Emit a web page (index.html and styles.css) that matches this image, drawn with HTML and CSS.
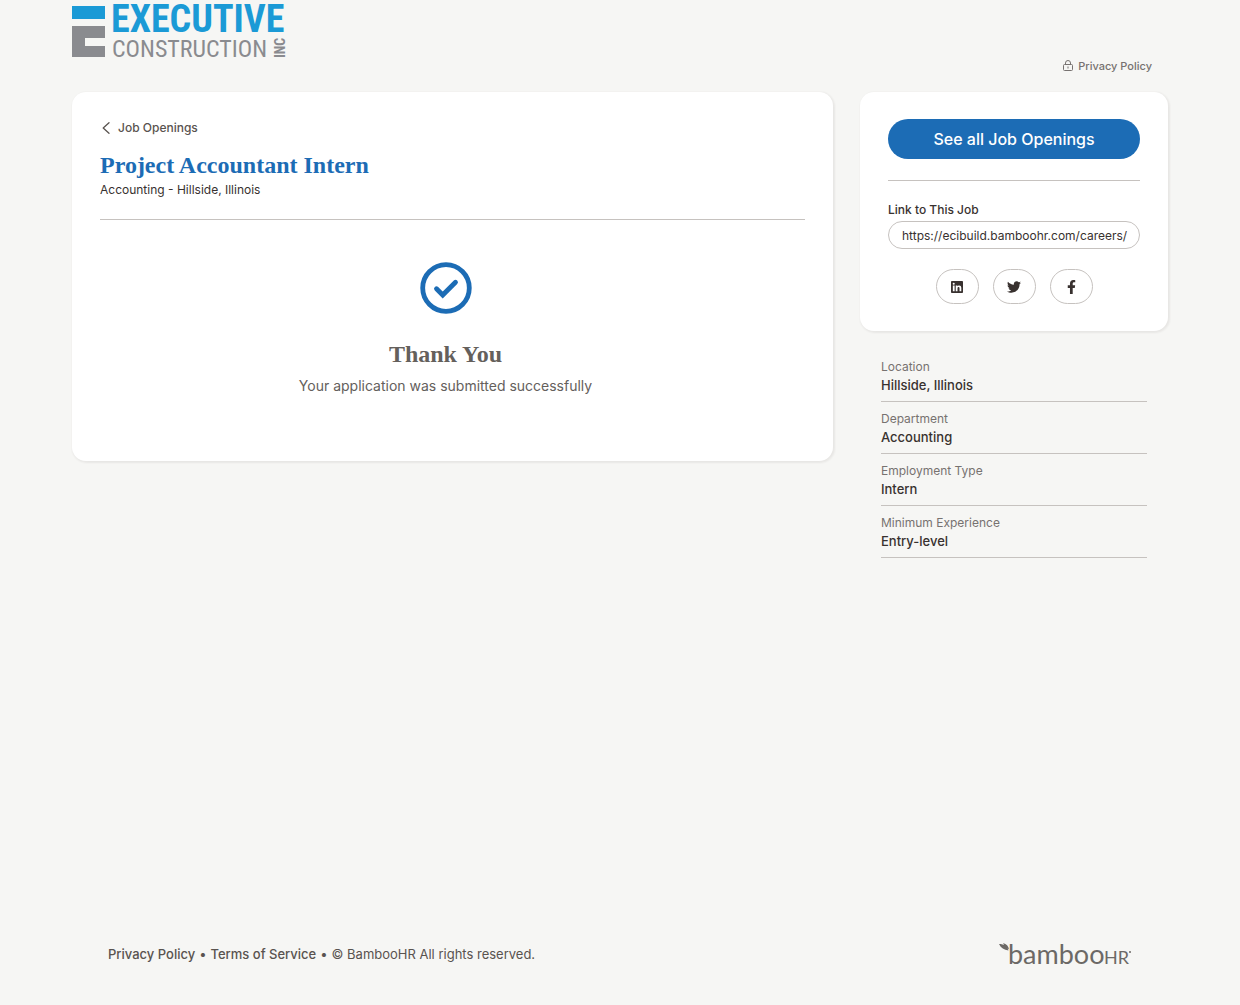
FILE: index.html
```html
<!DOCTYPE html>
<html lang="en">
<head>
    <meta charset="UTF-8">
    <meta name="viewport" content="width=device-width, initial-scale=1.0">
    <title>Project Accountant Intern - Executive Construction Inc</title>
    <link rel="stylesheet" href="styles.css">
</head>
<body>

<div class="page">
    <header class="header">
        <a href="#" class="logo" aria-label="Executive Construction Inc">
            <svg width="220" height="60" viewBox="0 0 220 60">
                <path fill="#1b9ad6" d="M0 6h33v13H0z"/>
                <path fill="#8a8b8f" d="M0 26h33v12H13v8h20v11H0z"/>
                <text class="logo-top" x="39" y="32">EXECUTIVE</text>
                <text class="logo-bottom" x="40" y="57">CONSTRUCTION</text>
                <text class="logo-inc" transform="translate(213 58) rotate(-90)">INC</text>
            </svg>
        </a>
        <a href="#" class="privacy">
            <svg width="10" height="12" viewBox="0 0 10 12" fill="none" stroke="currentColor">
                <rect x="0.5" y="4.5" width="9" height="6" rx="1"/>
                <path d="M2.5 4.5V3a2.5 2.5 0 0 1 5 0v1.500M5 6.500v2"/>
            </svg>
            Privacy Policy
        </a>
    </header>

    <div class="content">
        <main class="card job">
            <a href="#" class="back">
                <svg width="8" height="12" viewBox="0 0 8 12" fill="none" stroke="currentColor" stroke-width="1.300" stroke-linecap="round" stroke-linejoin="round">
                    <path d="M7 .8 1.200 6 7 11.200"/>
                </svg>
                Job Openings
            </a>
            <h1>Project Accountant Intern</h1>
            <p class="subtitle">Accounting - Hillside, Illinois</p>

            <!-- Submitted message -->
            <div class="success">
                <svg width="52" height="52" viewBox="0 0 52 52" fill="none" stroke="#1c6cb5">
                    <circle cx="26" cy="26" r="23.300" stroke-width="4.800"/>
                    <path d="m16.500 26.800 6.200 6.200 12.800-12.800" stroke-width="4.800" stroke-linecap="round"/>
                </svg>
                <h2>Thank You</h2>
                <p>Your application was submitted successfully</p>
            </div>
        </main>

        <aside class="sidebar">
            <div class="card share">
                <button type="button" class="all-jobs">See all Job Openings</button>
                <label for="job-link">Link to This Job</label>
                <input type="text" id="job-link" value="https://ecibuild.bamboohr.com/careers/" readonly>
                <div class="social">
                    <button type="button" aria-label="Share on LinkedIn">
                        <svg width="12" height="12" viewBox="0 0 448 448">
                            <path d="M416 0H32C14 0 0 14.500 0 32.300v383.400C0 433.500 14 448 32 448h384c17.600 0 32-14.500 32-32.300V32.300C448 14.500 433.600 0 416 0zM135 384H69V170h66zM102 141a38.500 38.500 0 1 1 0-77 38.500 38.500 0 0 1 0 77zm282 243h-66V280c0-25 0-57-35-57s-40 27-40 55v106h-66V170h64v29h1c9-17 30-35 63-35 67 0 80 44 80 102z"/>
                        </svg>
                    </button>
                    <button type="button" aria-label="Share on Twitter">
                        <svg width="14" height="14" viewBox="0 0 512 512">
                            <path d="M459 152c.3 4.500.3 9 .3 13.600 0 139-106 299-299 299-59 0-115-17-161-47 8 1 16 1.300 25 1.300 49 0 94-17 130-45-46-1-85-31-98-73 6.500 1 13 1.600 20 1.600 9 0 19-1.300 28-3.600C56 289 20 247 20 196v-1.300c14 8 30 13 47 13.600C39 189.500 21 158 21 121c0-19 5-37 14-53 52 64 129 105 216 110-1.600-8-2.600-16-2.600-24 0-58 47-105 105-105 30 0 57 13 77 33 24-4.500 46-13 67-25-8 24-24 45-46 58 21-2.300 42-8 60-16-14 21-32 39-52 53z"/>
                        </svg>
                    </button>
                    <button type="button" aria-label="Share on Facebook">
                        <svg width="9" height="14" viewBox="0 0 320 512">
                            <path d="m279 288 14-93h-89v-60c0-25 12-50 52-50h41V7s-37-7-72-7c-73 0-121 44-121 125v70H23v93h81v224h100V288z"/>
                        </svg>
                    </button>
                </div>
            </div>

            <dl class="details">
                <div>
                    <dt>Location</dt>
                    <dd>Hillside, Illinois</dd>
                </div>
                <div>
                    <dt>Department</dt>
                    <dd>Accounting</dd>
                </div>
                <div>
                    <dt>Employment Type</dt>
                    <dd>Intern</dd>
                </div>
                <div>
                    <dt>Minimum Experience</dt>
                    <dd>Entry-level</dd>
                </div>
            </dl>
        </aside>
    </div>

    <footer class="footer">
        <p>
            <a href="#">Privacy Policy</a><span>•</span><a href="#">Terms of Service</a><span>•</span>© BambooHR All rights reserved.
        </p>
        <a href="#" aria-label="BambooHR">
            <svg width="134" height="36" viewBox="0 0 134 36" fill="#6c6966">
                <path d="M1 8c5 0 8 2 9.500 6.500C6 14 3 12 1 8zM5 7c3.500 1 5.500 3 6 6.500C8.500 12 6.500 10 5 7z"/>
                <text class="bamboo" x="10" y="28">bamboo</text>
                <text class="bamboo-hr" x="106" y="28">HR</text>
                <circle cx="132" cy="16" r="1"/>
            </svg>
        </a>
    </footer>
</div>

</body>
</html>
```
FILE: styles.css
```css
* {
    box-sizing: border-box;
}

body {
    margin: 0;
    background: #f6f6f4;
    color: #38312f;
    font-family: Inter, Arial, sans-serif;
    font-size: 12px;
    line-height: 20px;
}

h1, h2, p, dl, dd {
    margin: 0;
}

a {
    color: inherit;
    text-decoration: none;
}

svg {
    display: block;
    overflow: visible;
}

.page {
    display: flex;
    flex-direction: column;
    min-height: 100vh;
    max-width: 1240px;
    margin: 0 auto;
    padding: 0 72px;
}

.header {
    display: flex;
    justify-content: space-between;
    align-items: flex-end;
    padding: 0 16px 16px 0;
}

.logo {
    padding-bottom: 16px;
}

.logo-top, .logo-bottom, .logo-inc {
    font-family: "Roboto Condensed", Roboto, sans-serif;
}

.logo-top {
    font-size: 38px;
    font-weight: bold;
    fill: #1b9ad6;
}

.logo-bottom {
    font-size: 24px;
    fill: #8a8b8f;
}

.logo-inc {
    font-size: 14px;
    font-weight: bold;
    fill: #8a8b8f;
}

.privacy {
    display: flex;
    align-items: center;
    gap: 5px;
    color: #777270;
    font-size: 11px;
    font-weight: 500;
}

.content {
    display: flex;
    align-items: flex-start;
    gap: 27px;
}

.card {
    background: #fff;
    border-radius: 14px;
    box-shadow: 1px 1px 2px 1px rgba(56, 49, 47, 0.07);
}

.job {
    flex: 1;
    padding: 26px 28px 65px;
}

.back {
    display: inline-flex;
    align-items: center;
    gap: 8px;
    padding-left: 2px;
    color: #59534f;
    font-weight: 500;
}

h1, h2 {
    font-family: "Liberation Serif", serif;
    font-size: 24px;
    line-height: 30px;
}

h1 {
    margin-top: 10px;
    color: #1c6cb5;
}

.subtitle {
    padding-bottom: 19px;
    border-bottom: 1px solid #c6c2bf;
}

.success {
    display: flex;
    flex-direction: column;
    align-items: center;
    padding: 42px 14px 0 0;
    color: #64605c;
    font-size: 14px;
}

.success h2 {
    margin: 25px 0 7px;
}

.sidebar {
    width: 308px;
}

.share {
    padding: 27px 28px;
}

.all-jobs {
    display: block;
    width: 100%;
    height: 40px;
    border: none;
    border-radius: 20px;
    background: #1c6cb5;
    color: #fff;
    font-family: inherit;
    font-size: 16px;
    font-weight: 500;
    cursor: pointer;
}

.share label {
    display: block;
    margin-top: 21px;
    padding-top: 19px;
    border-top: 1px solid #c6c2bf;
    font-weight: 500;
}

.share input {
    display: block;
    width: 100%;
    height: 28px;
    margin-top: 1px;
    padding: 0 10px 0 13px;
    border: 1px solid #c6c2bf;
    border-radius: 14px;
    background: #fff;
    color: #38312f;
    font-family: inherit;
    font-size: 12px;
}

.social {
    display: flex;
    justify-content: center;
    gap: 14px;
    margin-top: 20px;
}

.social button {
    display: flex;
    align-items: center;
    justify-content: center;
    width: 43px;
    height: 35px;
    padding: 0;
    border: 1px solid #c6c2bf;
    border-radius: 18px;
    background: #fff;
    cursor: pointer;
}

.social svg {
    fill: #38312f;
}

.details {
    margin: 25px 21px 0;
}

.details div {
    margin-bottom: 6px;
    padding-bottom: 6px;
    border-bottom: 1px solid #c6c2bf;
    line-height: 19px;
}

.details dt {
    padding-top: 1px;
    color: #777270;
}

.details dd {
    font-size: 13px;
    font-weight: 500;
}

.footer {
    display: flex;
    justify-content: space-between;
    align-items: center;
    margin-top: auto;
    padding: 33px 36px;
    color: #59534f;
    font-size: 13px;
}

.footer p a {
    font-weight: 500;
}

.footer span {
    margin: 0 4px;
}

.bamboo, .bamboo-hr {
    font-family: Lato, sans-serif;
}

.bamboo {
    font-size: 27px;
}

.bamboo-hr {
    font-size: 18px;
}
```
